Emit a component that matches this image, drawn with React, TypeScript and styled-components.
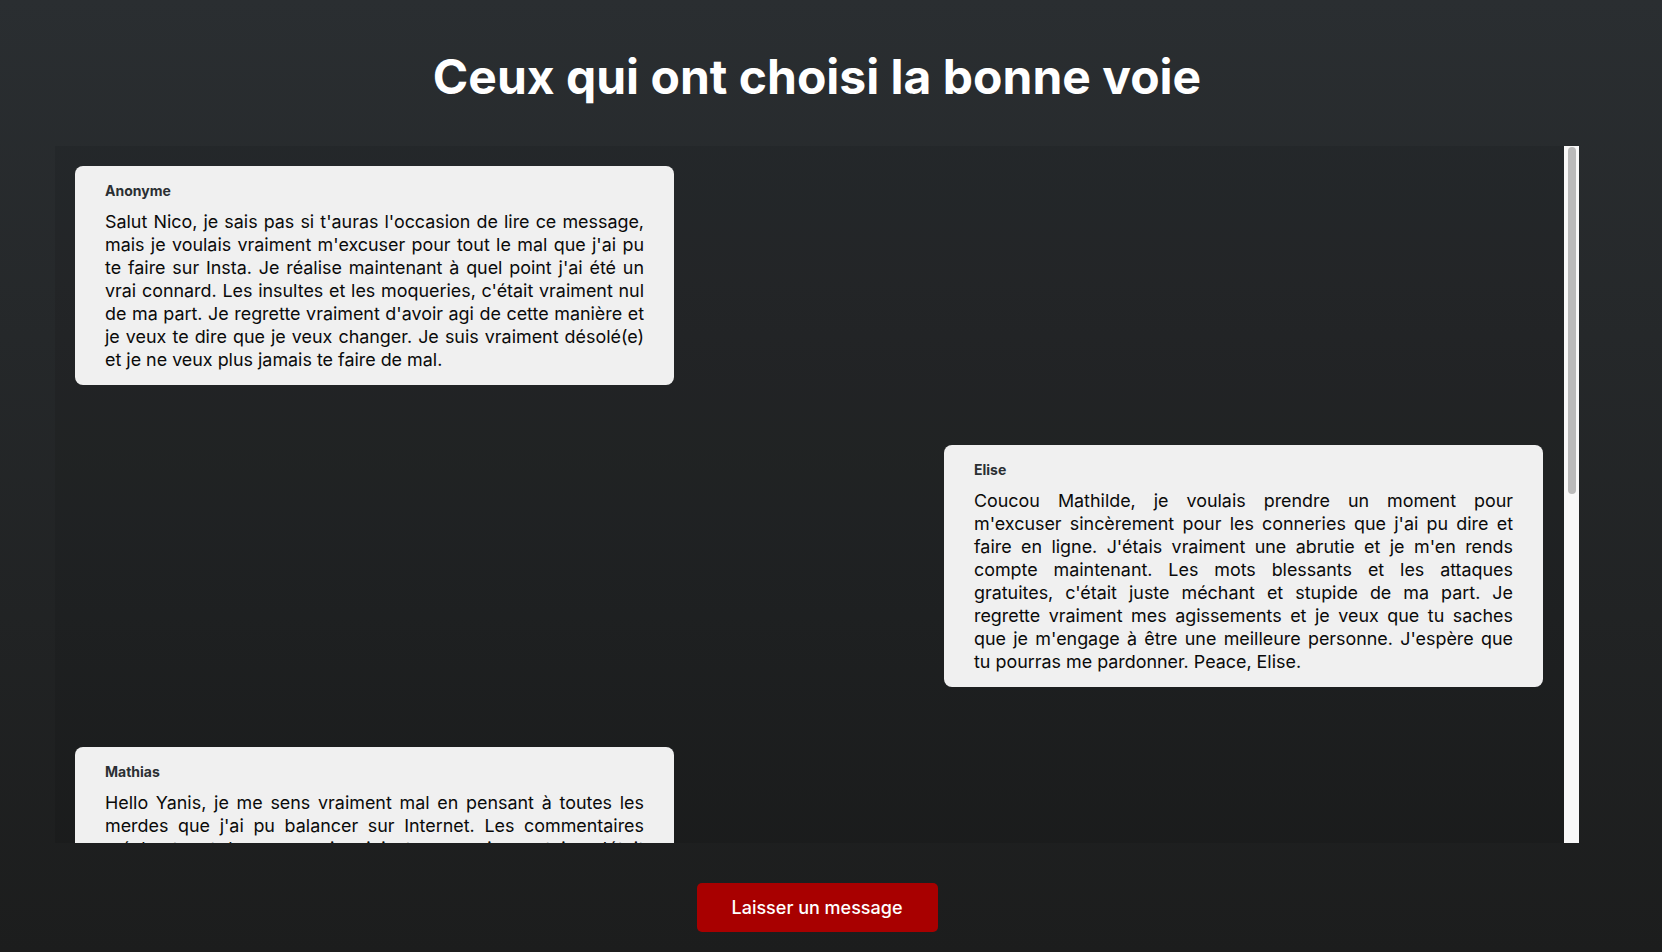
import React, { useLayoutEffect, useRef, useState } from "react";
import styled, { createGlobalStyle } from "styled-components";

const Global = createGlobalStyle`
  html, body { margin: 0; padding: 0; }
  body {
    font-family: Inter, "Noto Sans", "Liberation Sans", sans-serif;
    background: linear-gradient(180deg, #2a2e31 0%, #1c1d1d 100%);
    min-height: 952px;
    color: #fff;
  }
  * { box-sizing: border-box; }
`;

const Page = styled.main`
  height: 952px;
  padding: 48px 83px 0 55px;
  display: flex;
  flex-direction: column;
  align-items: center;
`;

const Title = styled.h1`
  margin: 0 0 40px;
  font-size: 48px;
  line-height: 58px;
  font-weight: 700;
  color: #ffffff;
  text-align: center;
`;

const Frame = styled.div`
  width: 100%;
  height: 697px;
  flex: none;
  display: flex;
  background: rgba(0, 0, 0, 0.08);
`;

const Feed = styled.section`
  flex: 1;
  min-width: 0;
  height: 100%;
  overflow-y: auto;
  scrollbar-width: none;
  padding: 20px 21px 20px 20px;
  display: flex;
  flex-direction: column;
  gap: 60px;

  &::-webkit-scrollbar { display: none; }
`;

const Track = styled.div`
  width: 15px;
  flex: none;
  height: 100%;
  background: #f8f8f8;
  padding: 1px 3px 0 4px;
`;

const Thumb = styled.div`
  width: 8px;
  background: #bababa;
  border-radius: 4px;
`;

const Card = styled.article<{ $right?: boolean }>`
  width: 599px;
  flex: none;
  align-self: ${(p) => (p.$right ? "flex-end" : "flex-start")};
  background: #f0f0f0;
  border-radius: 8px;
  padding: 16px 30px 14px;
  color: #000;
`;

const Author = styled.div`
  font-size: 14px;
  line-height: 17px;
  font-weight: 700;
  color: #2b2f33;
  margin-bottom: 11px;
`;

const Body = styled.p`
  margin: 0;
  font-size: 17.9px;
  line-height: 23px;
  text-align: justify;
  color: #0a0a0a;
`;

const Button = styled.button`
  margin-top: 40px;
  width: 241px;
  height: 49px;
  flex: none;
  border: none;
  border-radius: 5px;
  background: #a80000;
  color: #fff;
  font-family: Inter, "Noto Sans", sans-serif;
  font-size: 18px;
  font-weight: 500;
  cursor: pointer;
`;

const messages = [
  {
    author: "Anonyme",
    text: "Salut Nico, je sais pas si t'auras l'occasion de lire ce message, mais je voulais vraiment m'excuser pour tout le mal que j'ai pu te faire sur Insta. Je réalise maintenant à quel point j'ai été un vrai connard. Les insultes et les moqueries, c'était vraiment nul de ma part. Je regrette vraiment d'avoir agi de cette manière et je veux te dire que je veux changer. Je suis vraiment désolé(e) et je ne veux plus jamais te faire de mal.",
  },
  {
    author: "Elise",
    text: "Coucou Mathilde, je voulais prendre un moment pour m'excuser sincèrement pour les conneries que j'ai pu dire et faire en ligne. J'étais vraiment une abrutie et je m'en rends compte maintenant. Les mots blessants et les attaques gratuites, c'était juste méchant et stupide de ma part. Je regrette vraiment mes agissements et je veux que tu saches que je m'engage à être une meilleure personne. J'espère que tu pourras me pardonner. Peace, Elise.",
  },
  {
    author: "Mathias",
    text: "Hello Yanis, je me sens vraiment mal en pensant à toutes les merdes que j'ai pu balancer sur Internet. Les commentaires méchants et les moqueries injustes que je postais, c'était complètement débile et ça ne reflète pas qui je suis vraiment. Je suis désolé pour tout ce que je t'ai fait subir, tu ne méritais rien de tout ça. J'espère qu'un jour tu pourras accepter mes excuses et que tu sauras que j'ai changé.",
  },
  {
    author: "Camille",
    text: "Salut Léa, ça fait un moment que je pense à t'écrire ce message. Je sais que mes commentaires sur tes photos t'ont fait beaucoup de mal, et je n'ai aucune excuse pour ça. J'ai suivi les autres sans réfléchir, juste pour faire rire, et je m'en veux énormément aujourd'hui. Tu ne méritais pas tout ça. Je te demande pardon, sincèrement, et je te promets de ne plus jamais recommencer. Prends soin de toi, Camille.",
  },
  {
    author: "Hugo",
    text: "Bonjour Thomas, je voulais te dire que je regrette profondément tout ce que j'ai écrit sur toi dans les groupes de discussion. C'était lâche, cruel et totalement injuste. Avec le recul, je comprends à quel point ça a dû être difficile pour toi d'aller en cours chaque jour. Je ne cherche pas d'excuses, je veux juste que tu saches que je suis vraiment désolé et que j'ai compris la leçon. Bonne continuation, Hugo.",
  },
];

export default function App() {
  const feedRef = useRef<HTMLElement>(null);
  const [thumb, setThumb] = useState({ top: 0, height: 350 });

  const update = () => {
    const el = feedRef.current;
    if (!el) return;
    const track = el.clientHeight - 1;
    const ratio = el.clientHeight / el.scrollHeight;
    const height = Math.max(30, track * ratio);
    const max = el.scrollHeight - el.clientHeight;
    const top = max > 0 ? (el.scrollTop / max) * (track - height) : 0;
    setThumb({ top, height });
  };

  useLayoutEffect(() => {
    update();
    window.addEventListener("resize", update);
    return () => window.removeEventListener("resize", update);
  }, []);

  return (
    <>
      <Global />
      <Page>
        <Title>Ceux qui ont choisi la bonne voie</Title>
        <Frame>
          <Feed ref={feedRef} onScroll={update}>
            {messages.map((m, i) => (
              <Card key={m.author} $right={i % 2 === 1}>
                <Author>{m.author}</Author>
                <Body>{m.text}</Body>
              </Card>
            ))}
          </Feed>
          <Track>
            <Thumb style={{ height: thumb.height, marginTop: thumb.top }} />
          </Track>
        </Frame>
        <Button>Laisser un message</Button>
      </Page>
    </>
  );
}
